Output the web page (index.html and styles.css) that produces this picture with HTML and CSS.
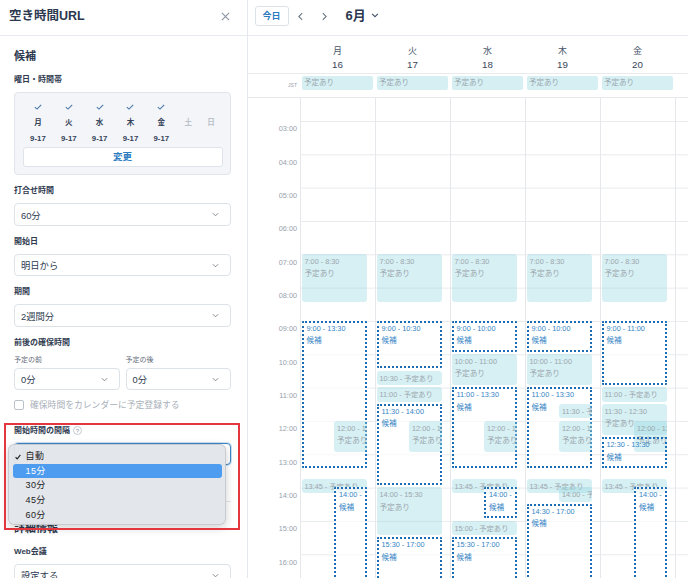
FILE: index.html
```html
<!DOCTYPE html>
<html lang="ja">
<head>
<meta charset="utf-8">
<title>空き時間URL</title>
<link rel="stylesheet" href="styles.css">
</head>
<body>
<div class="app">
  <aside class="side">
    <div class="side-head">
      <h1 class="ttl">空き時間URL</h1>
      <svg class="close" viewBox="0 0 10 10" width="9" height="9"><path d="M1 1L9 9M9 1L1 9" stroke="#8d98a4" stroke-width="1.3" fill="none"/></svg>
    </div>
    <div class="sb">
      <h2 class="sec">候補</h2>
      <div class="lbl lbl-first">曜日・時間帯</div>
      <div class="dbox">
        <div class="drow">
          <div class="d"><svg class="ck" viewBox="0 0 8 6" width="8" height="6"><path d="M0.8 3.2L3 5.1L7.2 0.8" fill="none" stroke="#4b78a8" stroke-width="1.1"/></svg><b>月</b><i>9-17</i></div>
          <div class="d"><svg class="ck" viewBox="0 0 8 6" width="8" height="6"><path d="M0.8 3.2L3 5.1L7.2 0.8" fill="none" stroke="#4b78a8" stroke-width="1.1"/></svg><b>火</b><i>9-17</i></div>
          <div class="d"><svg class="ck" viewBox="0 0 8 6" width="8" height="6"><path d="M0.8 3.2L3 5.1L7.2 0.8" fill="none" stroke="#4b78a8" stroke-width="1.1"/></svg><b>水</b><i>9-17</i></div>
          <div class="d"><svg class="ck" viewBox="0 0 8 6" width="8" height="6"><path d="M0.8 3.2L3 5.1L7.2 0.8" fill="none" stroke="#4b78a8" stroke-width="1.1"/></svg><b>木</b><i>9-17</i></div>
          <div class="d"><svg class="ck" viewBox="0 0 8 6" width="8" height="6"><path d="M0.8 3.2L3 5.1L7.2 0.8" fill="none" stroke="#4b78a8" stroke-width="1.1"/></svg><b>金</b><i>9-17</i></div>
          <div class="d we"><span class="ck"></span><b>土</b><i></i></div>
          <div class="d we"><span class="ck"></span><b>日</b><i></i></div>
        </div>
        <div class="chg">変更</div>
      </div>

      <div class="fld">
        <div class="lbl">打合せ時間</div>
        <div class="sel"><span>60分</span><svg class="cv" viewBox="0 0 8 5" width="7" height="5"><path d="M1 1L4 4L7 1" fill="none" stroke="#7f8993" stroke-width="1.1"/></svg></div>
      </div>
      <div class="fld">
        <div class="lbl">開始日</div>
        <div class="sel"><span>明日から</span><svg class="cv" viewBox="0 0 8 5" width="7" height="5"><path d="M1 1L4 4L7 1" fill="none" stroke="#7f8993" stroke-width="1.1"/></svg></div>
      </div>
      <div class="fld">
        <div class="lbl">期間</div>
        <div class="sel"><span>2週間分</span><svg class="cv" viewBox="0 0 8 5" width="7" height="5"><path d="M1 1L4 4L7 1" fill="none" stroke="#7f8993" stroke-width="1.1"/></svg></div>
      </div>
      <div class="fld">
        <div class="lbl">前後の確保時間</div>
        <div class="pair">
          <div class="half-f">
            <div class="sub">予定の前</div>
            <div class="sel"><span>0分</span><svg class="cv" viewBox="0 0 8 5" width="7" height="5"><path d="M1 1L4 4L7 1" fill="none" stroke="#7f8993" stroke-width="1.1"/></svg></div>
          </div>
          <div class="half-f">
            <div class="sub">予定の後</div>
            <div class="sel"><span>0分</span><svg class="cv" viewBox="0 0 8 5" width="7" height="5"><path d="M1 1L4 4L7 1" fill="none" stroke="#7f8993" stroke-width="1.1"/></svg></div>
          </div>
        </div>
      </div>
      <div class="chk"><span class="cbox"></span><span>確保時間をカレンダーに予定登録する</span></div>

      <div class="fld f-int">
        <div class="lbl">開始時間の間隔 <span class="q">?</span></div>
        <div class="sel focus"><span>自動</span><svg class="cv" viewBox="0 0 8 5" width="7" height="5"><path d="M1 1L4 4L7 1" fill="none" stroke="#7f8993" stroke-width="1.1"/></svg></div>
      </div>
      <div class="divider"></div>
      <h2 class="sec sec2">詳細情報</h2>
      <div class="fld f-web">
        <div class="lbl">Web会議</div>
        <div class="sel"><span>設定する</span><svg class="cv" viewBox="0 0 8 5" width="7" height="5"><path d="M1 1L4 4L7 1" fill="none" stroke="#7f8993" stroke-width="1.1"/></svg></div>
      </div>
    </div>

    <div class="menu">
      <div class="mi"><svg class="mck" viewBox="0 0 7 6" width="6" height="6"><path d="M0.7 3.3L2.6 5.2L6.3 0.6" fill="none" stroke="#222" stroke-width="1.3"/></svg>自動</div>
      <div class="mi act">15分</div>
      <div class="mi">30分</div>
      <div class="mi">45分</div>
      <div class="mi">60分</div>
    </div>
    <div class="mark"></div>
  </aside>

  <main class="cal">
    <div class="cal-top">
      <div class="today">今日</div>
      <div class="nav"><svg viewBox="0 0 6 10" width="5" height="9"><path d="M5 1L1 5L5 9" fill="none" stroke="#6d7884" stroke-width="1.3"/></svg></div>
      <div class="nav"><svg viewBox="0 0 6 10" width="5" height="9"><path d="M1 1L5 5L1 9" fill="none" stroke="#6d7884" stroke-width="1.3"/></svg></div>
      <div class="month">6月</div>
      <svg class="mcv" viewBox="0 0 9 6" width="8" height="5"><path d="M1 1L4.5 4.5L8 1" fill="none" stroke="#45536a" stroke-width="1.3"/></svg>
    </div>

    <div class="hdr">
      <div class="gut"></div>
      <div class="dh"><span class="dn">月</span><span class="dd">16</span></div>
      <div class="dh"><span class="dn">火</span><span class="dd">17</span></div>
      <div class="dh"><span class="dn">水</span><span class="dd">18</span></div>
      <div class="dh"><span class="dn">木</span><span class="dd">19</span></div>
      <div class="dh"><span class="dn">金</span><span class="dd">20</span></div>
      <div class="dh rest"></div>
    </div>

    <div class="allday">
      <div class="gut jst">JST</div>
      <div class="adc"><div class="ad">予定あり</div></div>
      <div class="adc"><div class="ad">予定あり</div></div>
      <div class="adc"><div class="ad">予定あり</div></div>
      <div class="adc"><div class="ad">予定あり</div></div>
      <div class="adc"><div class="ad">予定あり</div></div>
      <div class="adc rest"></div>
    </div>

    <div class="body">
      <div class="track">
        <div class="gut hours">
          <div class="hr">00:00</div><div class="hr">01:00</div><div class="hr">02:00</div><div class="hr">03:00</div>
          <div class="hr">04:00</div><div class="hr">05:00</div><div class="hr">06:00</div><div class="hr">07:00</div>
          <div class="hr">08:00</div><div class="hr">09:00</div><div class="hr">10:00</div><div class="hr">11:00</div>
          <div class="hr">12:00</div><div class="hr">13:00</div><div class="hr">14:00</div><div class="hr">15:00</div>
          <div class="hr">16:00</div><div class="hr">17:00</div><div class="hr">18:00</div><div class="hr">19:00</div>
          <div class="hr">20:00</div><div class="hr">21:00</div><div class="hr">22:00</div><div class="hr">23:00</div>
        </div>

        <div class="col">
          <div class="ev busy" style="--s:7;--d:1.5"><div>7:00 - 8:30</div><div class="t2">予定あり</div></div>
          <div class="ev cand" style="--s:9;--d:4.5"><div>9:00 - 13:30</div><div class="t2">候補</div></div>
          <div class="ev busy half" style="--s:12;--d:1"><div>12:00 - 13:00</div><div class="t2">予定あり</div></div>
          <div class="ev busy" style="--s:13.75;--d:0.5"><div>13:45 - 予定あり</div></div>
          <div class="ev cand half" style="--s:14;--d:3"><div>14:00 -</div><div class="t2">候補</div></div>
        </div>

        <div class="col">
          <div class="ev busy" style="--s:7;--d:1.5"><div>7:00 - 8:30</div><div class="t2">予定あり</div></div>
          <div class="ev cand" style="--s:9;--d:1.5"><div>9:00 - 10:30</div><div class="t2">候補</div></div>
          <div class="ev busy" style="--s:10.5;--d:0.5"><div>10:30 - 予定あり</div></div>
          <div class="ev busy" style="--s:11;--d:0.5"><div>11:00 - 予定あり</div></div>
          <div class="ev cand" style="--s:11.5;--d:2.5"><div>11:30 - 14:00</div><div class="t2">候補</div></div>
          <div class="ev busy half" style="--s:12;--d:1"><div>12:00 - 13:00</div><div class="t2">予定あり</div></div>
          <div class="ev busy" style="--s:14;--d:1.5"><div>14:00 - 15:30</div><div class="t2">予定あり</div></div>
          <div class="ev cand" style="--s:15.5;--d:1.5"><div>15:30 - 17:00</div><div class="t2">候補</div></div>
        </div>

        <div class="col">
          <div class="ev busy" style="--s:7;--d:1.5"><div>7:00 - 8:30</div><div class="t2">予定あり</div></div>
          <div class="ev cand" style="--s:9;--d:1"><div>9:00 - 10:00</div><div class="t2">候補</div></div>
          <div class="ev busy" style="--s:10;--d:1"><div>10:00 - 11:00</div><div class="t2">予定あり</div></div>
          <div class="ev cand" style="--s:11;--d:2.5"><div>11:00 - 13:30</div><div class="t2">候補</div></div>
          <div class="ev busy half" style="--s:12;--d:1"><div>12:00 - 13:00</div><div class="t2">予定あり</div></div>
          <div class="ev busy" style="--s:13.75;--d:0.5"><div>13:45 - 予定あり</div></div>
          <div class="ev cand half" style="--s:14;--d:1"><div>14:00 -</div><div class="t2">候補</div></div>
          <div class="ev busy" style="--s:15;--d:0.5"><div>15:00 - 予定あり</div></div>
          <div class="ev cand" style="--s:15.5;--d:1.5"><div>15:30 - 17:00</div><div class="t2">候補</div></div>
        </div>

        <div class="col">
          <div class="ev busy" style="--s:7;--d:1.5"><div>7:00 - 8:30</div><div class="t2">予定あり</div></div>
          <div class="ev cand" style="--s:9;--d:1"><div>9:00 - 10:00</div><div class="t2">候補</div></div>
          <div class="ev busy" style="--s:10;--d:1"><div>10:00 - 11:00</div><div class="t2">予定あり</div></div>
          <div class="ev cand" style="--s:11;--d:2.5"><div>11:00 - 13:30</div><div class="t2">候補</div></div>
          <div class="ev busy half" style="--s:11.5;--d:0.5"><div>11:30 - 予定あり</div></div>
          <div class="ev busy half" style="--s:12;--d:1"><div>12:00 - 13:00</div><div class="t2">予定あり</div></div>
          <div class="ev busy" style="--s:13.75;--d:0.5"><div>13:45 - 予定あり</div></div>
          <div class="ev busy half" style="--s:14;--d:0.5"><div>14:00 - 予定あり</div></div>
          <div class="ev cand" style="--s:14.5;--d:2.5"><div>14:30 - 17:00</div><div class="t2">候補</div></div>
        </div>

        <div class="col">
          <div class="ev busy" style="--s:7;--d:1.5"><div>7:00 - 8:30</div><div class="t2">予定あり</div></div>
          <div class="ev cand" style="--s:9;--d:2"><div>9:00 - 11:00</div><div class="t2">候補</div></div>
          <div class="ev busy" style="--s:11;--d:0.5"><div>11:00 - 予定あり</div></div>
          <div class="ev busy" style="--s:11.5;--d:1"><div>11:30 - 12:30</div><div class="t2">予定あり</div></div>
          <div class="ev busy half" style="--s:12;--d:1"><div>12:00 - 13:00</div><div class="t2">予定あり</div></div>
          <div class="ev cand clear" style="--s:12.5;--d:1"><div>12:30 - 13:30</div><div class="t2">候補</div></div>
          <div class="ev busy" style="--s:13.75;--d:0.5"><div>13:45 - 予定あり</div></div>
          <div class="ev cand half" style="--s:14;--d:3"><div>14:00 -</div><div class="t2">候補</div></div>
        </div>

        <div class="col rest"></div>
      </div>
    </div>
  </main>
</div>
</body>
</html>
```

FILE: styles.css
```css
* { box-sizing: border-box; }
html, body { margin: 0; padding: 0; }
body {
  width: 688px;
  height: 578px;
  overflow: hidden;
  background: #fff;
  font-family: "Liberation Sans", "Noto Sans CJK JP", sans-serif;
  color: #2d3a4f;
}
.app { display: flex; height: 578px; }

/* ---------- sidebar ---------- */
.side {
  position: relative;
  flex: none;
  width: 248px;
  border-right: 1px solid #e4e7eb;
  overflow: hidden;
}
.side-head {
  height: 36px;
  border-bottom: 1px solid #e6e9ee;
  display: flex;
  align-items: flex-start;
  justify-content: space-between;
  padding: 8px 17px 0 9px;
}
.ttl {
  margin: 0;
  font-size: 12.5px;
  line-height: 16px;
  font-weight: 700;
  color: #2b3850;
}
.close { margin-top: 3.5px; }

.sb { padding: 0 16px 0 14px; }
.sec {
  margin: 12.5px 0 0;
  font-size: 11px;
  line-height: 14px;
  font-weight: 700;
  color: #2d3a4f;
}
.lbl {
  font-size: 8px;
  line-height: 12px;
  font-weight: 700;
  color: #2f3b50;
  display: flex;
  align-items: center;
}
.lbl-first { margin-top: 11.5px; }

.dbox {
  margin-top: 6.3px;
  background: #f3f5f8;
  border: 1px solid #e0e5eb;
  border-radius: 4px;
  padding: 8px 7.5px 7px;
}
.drow { display: flex; }
.d {
  width: 31px;
  display: flex;
  flex-direction: column;
  align-items: center;
}
.d.we { width: 23px; }
.d .ck { display: block; width: 8px; height: 6px; padding-top: 3px; box-sizing: content-box; margin-bottom: 3px; }
.d b {
  margin-top: 3.7px;
  font-size: 7.5px;
  line-height: 12px;
  font-weight: 700;
  color: #354259;
}
.d.we b { color: #b9c1ca; }
.d i {
  margin-top: 4.5px;
  font-style: normal;
  font-size: 7.8px;
  line-height: 12px;
  height: 12px;
  font-weight: 700;
  color: #354259;
}
.chg {
  margin-top: 2px;
  height: 20px;
  background: #fff;
  border: 1px solid #dfe4ea;
  border-radius: 3px;
  text-align: center;
  font-size: 9.5px;
  line-height: 18px;
  font-weight: 700;
  color: #2b7bbf;
}

.fld { margin-top: 10px; }
.fld .lbl { margin-bottom: 6px; }
.sel {
  height: 22.5px;
  border: 1px solid #dde2e8;
  border-radius: 4px;
  background: #fff;
  display: flex;
  align-items: center;
  justify-content: space-between;
  padding: 0 11px 0 6px;
  font-size: 9.3px;
  color: #2d3a4f;
}
.sel.focus {
  border-color: #3d86c6;
  box-shadow: 0 0 0 1px rgba(61, 134, 198, 0.25);
}
.pair { display: flex; gap: 6px; }
.half-f { flex: 1; }
.sub {
  font-size: 7px;
  line-height: 10px;
  color: #5f6877;
  margin-bottom: 3px;
}
.chk {
  margin-top: 8.5px;
  height: 12px;
  display: flex;
  align-items: center;
  gap: 6px;
  font-size: 8.8px;
  color: #a8b0b9;
}
.cbox {
  width: 10px;
  height: 10px;
  border: 1px solid #b9c1ca;
  border-radius: 2px;
  background: #fff;
  flex: none;
}
.f-int { margin-top: 14px; }
.q {
  display: inline-flex;
  align-items: center;
  justify-content: center;
  width: 9px;
  height: 9px;
  margin-left: 3px;
  border: 1px solid #c6ccd3;
  border-radius: 50%;
  font-size: 6px;
  font-weight: 400;
  color: #8a949e;
}
.divider {
  margin-top: 36px;
  border-top: 1px solid #e3e6ea;
}
.sec2 { margin-top: 18.5px; }
.f-web { margin-top: 11px; }

/* dropdown menu over the select */
.menu {
  position: absolute;
  left: 8px;
  top: 443.5px;
  width: 218px;
  height: 81px;
  padding-top: 4.5px;
  background: rgba(226, 229, 234, 0.97);
  border: 1px solid rgba(0, 0, 0, 0.12);
  border-radius: 6px;
  box-shadow: 0 3px 10px rgba(0, 0, 0, 0.18);
  z-index: 5;
}
.mi {
  position: relative;
  height: 14.7px;
  line-height: 14.7px;
  margin: 0 3.3px 0 3.5px;
  padding-left: 13px;
  border-radius: 3px;
  font-size: 9px;
  letter-spacing: 0.4px;
  color: #222;
}
.mi.act { background: #4e9cf0; color: #fff; }
.mck { position: absolute; left: 2.5px; top: 4.6px; }

.mark {
  position: absolute;
  left: 4px;
  top: 423px;
  width: 236px;
  height: 107px;
  border: 2px solid #e3363f;
  z-index: 6;
}

/* ---------- calendar ---------- */
.cal {
  flex: 1;
  min-width: 0;
  display: flex;
  flex-direction: column;
  overflow: hidden;
}
.cal-top {
  height: 36px;
  flex: none;
  border-bottom: 1px solid #e6e9ee;
  display: flex;
  align-items: flex-start;
  padding: 6px 0 0 6.5px;
}
.today {
  width: 34px;
  height: 20px;
  border: 1px solid #dde2e8;
  border-radius: 3px;
  text-align: center;
  font-size: 9px;
  line-height: 18px;
  font-weight: 700;
  color: #2b7bbf;
}
.nav {
  width: 24px;
  height: 20px;
  display: flex;
  align-items: center;
  justify-content: center;
}
.month {
  margin-left: 9px;
  font-size: 13px;
  line-height: 20px;
  font-weight: 700;
  color: #2b3850;
}
.mcv { margin: 7px 0 0 5px; }

.gut { width: 52px; flex: none; }
.hdr {
  display: flex;
  height: 38px;
  flex: none;
  border-bottom: 1px solid #e8eaed;
}
.dh {
  width: 75px;
  flex: none;
  display: flex;
  flex-direction: column;
  align-items: center;
  padding-top: 8.5px;
  color: #48556a;
}
.dh.rest, .adc.rest { flex: 1; width: auto; }
.dn { font-size: 9px; line-height: 12px; }
.dd { font-size: 9.8px; line-height: 12px; margin-top: 2px; color: #3a4659; }

.allday {
  display: flex;
  height: 24px;
  flex: none;
  border-bottom: 1px solid #e6e8eb;
}
.jst {
  text-align: right;
  padding: 8px 3px 0 0;
  font-size: 5px;
  line-height: 6px;
  color: #98a1ab;
}
.adc { width: 75px; flex: none; padding: 2px 0 0 1.5px; }
.ad {
  width: 71px;
  height: 13.6px;
  background: #d5eff3;
  border-radius: 2px;
  padding-left: 2.5px;
  font-size: 7.5px;
  line-height: 13.6px;
  color: #9aa6ad;
}

.body { flex: 1; overflow: hidden; position: relative; }
.track {
  display: flex;
  height: 800px;
  margin-top: -77.3px;
}
.hours { display: flex; flex-direction: column; }
.hr {
  height: 33.333px;
  flex: none;
  padding: 4.8px 3px 0 0;
  text-align: right;
  font-size: 7.3px;
  line-height: 8px;
  color: #98a2ad;
}
.col {
  position: relative;
  width: 75px;
  flex: none;
  height: 800px;
  border-left: 1px solid #e6e7ea;
  background-image: linear-gradient(to bottom, #e9eaed 0, #e9eaed 1px, transparent 1px);
  background-size: 100% 33.333px;
}
.col.rest { flex: 1; width: auto; }

.ev {
  position: absolute;
  top: calc(var(--s) * 33.333px);
  height: calc(var(--d) * 33.333px - 2.5px);
  left: 0.5px;
  width: 65px;
  overflow: hidden;
  white-space: nowrap;
  padding: 4px 3px 0;
  font-size: 7.3px;
  line-height: 8.5px;
}
.ev .t2 { margin-top: 3.7px; font-size: 7.6px; }
.busy {
  background: rgba(150, 216, 226, 0.38);
  border-radius: 3px;
  color: #9ba6ad;
}
.cand {
  border: 2px dotted #1a6cb4;
  padding: 2px 2px 0 3px;
  background: rgba(255, 255, 255, 0.65);
  color: #3585c5;
  border-radius: 1px;
}
.cand.clear { background: transparent; }
.half { left: 33px; width: 32.5px; }
```
